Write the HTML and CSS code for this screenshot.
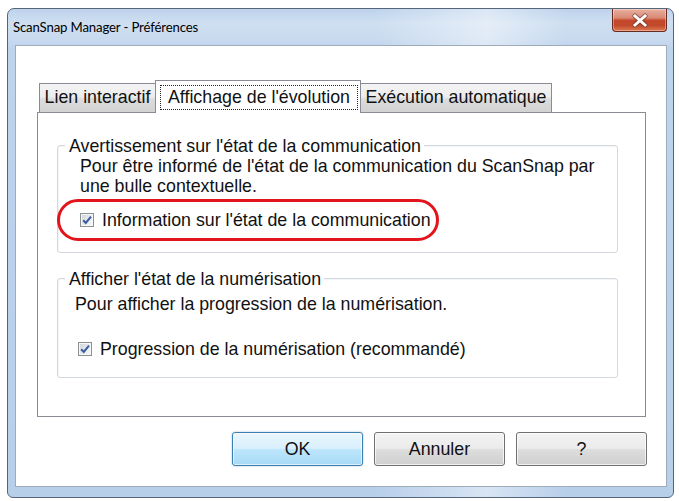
FILE: index.html
```html
<!DOCTYPE html>
<html lang="fr">
<head>
<meta charset="utf-8">
<title>ScanSnap Manager - Préférences</title>
<link rel="stylesheet" href="styles.css">
</head>
<body>
<div class="window">
  <div class="titlebar">
    <span class="title">ScanSnap Manager - Préférences</span>
    <div class="close">
      <svg width="20" height="15" viewBox="0 0 20 15">
        <path d="M5 3 L15 12 M15 3 L5 12" stroke="#5a2a22" stroke-width="5" stroke-linecap="round" fill="none" opacity="0.55"/>
        <path d="M5 3 L15 12 M15 3 L5 12" stroke="#ffffff" stroke-width="3" stroke-linecap="square" fill="none"/>
      </svg>
    </div>
  </div>
  <div class="client">
    <div class="tabs">
      <div class="tab tab-lien">Lien interactif</div>
      <div class="tab tab-active"><span class="focus">Affichage de l'évolution</span></div>
      <div class="tab tab-exec">Exécution automatique</div>
    </div>
    <div class="pane">
      <div class="group group-comm">
        <div class="legend">Avertissement sur l'état de la communication</div>
        <p class="desc desc-comm">Pour être informé de l'état de la communication du ScanSnap par<br>une bulle contextuelle.</p>
        <div class="check check-comm">
          <span class="box"><svg width="12" height="12" viewBox="0 0 12 12"><path d="M2.2 6.2 L4.8 9 L10 2.6" stroke="#3c5a9c" stroke-width="2" fill="none"/></svg></span>
          <span>Information sur l'état de la communication</span>
        </div>
        <div class="ring"></div>
      </div>
      <div class="group group-scan">
        <div class="legend">Afficher l'état de la numérisation</div>
        <p class="desc desc-scan">Pour afficher la progression de la numérisation.</p>
        <div class="check check-scan">
          <span class="box"><svg width="12" height="12" viewBox="0 0 12 12"><path d="M2.2 6.2 L4.8 9 L10 2.6" stroke="#3c5a9c" stroke-width="2" fill="none"/></svg></span>
          <span>Progression de la numérisation (recommandé)</span>
        </div>
      </div>
    </div>
    <div class="buttons">
      <div class="btn btn-default">OK</div>
      <div class="btn">Annuler</div>
      <div class="btn">?</div>
    </div>
  </div>
</div>
</body>
</html>
```
FILE: styles.css
```css
* { box-sizing: border-box; }
body {
  margin: 0;
  background: #ffffff;
  font-family: "Liberation Sans", Arial, sans-serif;
  color: #111;
}
.window {
  margin: 8px 0 0 7px;
  width: 667px;
  height: 490px;
  border: 1px solid #56657a;
  border-radius: 7px 7px 6px 6px;
  padding: 0 6px 10px 7px;
  display: flex;
  flex-direction: column;
  background:
    linear-gradient(to right, rgba(255,255,255,0) 0%, rgba(255,255,255,0) 55%, rgba(255,255,255,0.45) 72%, rgba(255,255,255,0) 84%, rgba(255,255,255,0) 100%),
    linear-gradient(#bdd3ec 0px, #cfdff1 14px, #c8daef 30px, #bed3ec 40px, #b8cfea 100%);
}
.titlebar {
  height: 36px;
  margin: 0 -6px 0 -7px;
  padding-left: 5px;
  display: flex;
  justify-content: space-between;
  align-items: flex-start;
}
.title {
  font-family: Lato, "Liberation Sans", sans-serif;
  font-size: 13.2px;
  letter-spacing: -0.15px;
  line-height: 17px;
  padding-top: 10px;
  color: #000;
}
.close {
  width: 55px;
  height: 23px;
  margin-right: 6px;
  border: 1px solid #6a2c20;
  border-top: none;
  border-radius: 0 0 4px 4px;
  background: linear-gradient(#e7b1a2 0%, #d98a74 40%, #c5472b 52%, #c04a2c 75%, #e07a52 100%);
  display: flex;
  align-items: center;
  justify-content: center;
  box-shadow: inset 0 0 0 1px rgba(255,255,255,0.35);
}
.close svg { display: block; }
.client {
  flex: 1;
  border: 1px solid #9eabb9;
  background: #ffffff;
  padding: 34px 20px 0 21px;
  display: flex;
  flex-direction: column;
  font-size: 17.8px;
  line-height: 20px;
}
.tabs {
  display: flex;
  align-items: flex-end;
  padding-left: 2px;
  height: 32px;
}
.tab {
  height: 29px;
  border: 1px solid #898c95;
  border-bottom: none;
  background: linear-gradient(#f4f4f4, #ececec 45%, #dcdcdc 55%, #d2d2d2);
  padding-top: 3px;
  text-align: center;
  white-space: nowrap;
}
.tab-lien { width: 117px; }
.tab-active {
  width: 206px;
  height: 33px;
  margin-left: -1px;
  margin-bottom: -1px;
  background: #ffffff;
  padding: 4px 2px 0 4px;
  position: relative;
  z-index: 1;
}
.tab-exec { width: 192px; margin-left: -1px; }
.focus {
  display: block;
  width: 198px;
  border: 1px dotted #222;
  padding: 1px 0 2px;
  line-height: 20px;
}
.pane {
  height: 305px;
  border: 1px solid #898c95;
  padding: 32px 27px 0 19px;
}
.group {
  position: relative;
  border: 1px solid #d3d9de;
  border-radius: 3px;
  box-shadow: 1px 1px 0 #f2f4f6 inset;
}
.group-comm { height: 108px; }
.group-scan { height: 100px; margin-top: 25px; }
.legend {
  display: table;
  margin: -10px 0 0 7px;
  padding: 0 3px 0 4px;
  background: #ffffff;
}
.desc { margin: 0; }
.desc-comm { margin-left: 22px; }
.desc-scan { margin: 5px 0 0 17px; }
.check {
  display: flex;
  align-items: center;
  gap: 8px;
  height: 20px;
}
.check-comm { margin: 14px 0 0 22px; }
.check-scan { margin: 25px 0 0 20px; }
.box {
  width: 14px;
  height: 14px;
  border: 1px solid #8e8f8f;
  background: linear-gradient(135deg, #cdd3da, #eef1f4 70%, #f8f9fa);
  box-shadow: inset 0 0 0 1px #f6f7f8;
  display: flex;
  align-items: center;
  justify-content: center;
}
.box svg { display: block; }
.ring {
  position: absolute;
  left: -1px;
  top: 53px;
  width: 382px;
  height: 42px;
  border: 3.5px solid #e2141c;
  border-radius: 21px;
}
.buttons {
  display: flex;
  justify-content: flex-end;
  gap: 11px;
  margin: 15px -1px 0 0;
}
.btn {
  width: 131px;
  height: 34px;
  border: 1px solid #707070;
  border-radius: 3px;
  background: linear-gradient(#f3f3f3, #ebebeb 48%, #dddddd 52%, #cfcfcf);
  box-shadow: inset 0 0 0 1px rgba(255,255,255,0.7);
  text-align: center;
  line-height: 32px;
  color: #111;
}
.btn-default {
  border-color: #3c7fb1;
  background: linear-gradient(#eaf6fd, #d9f0fc 48%, #bee6fd 52%, #a7d9f5);
  box-shadow: inset 0 0 0 1px rgba(255,255,255,0.6), 0 0 2px rgba(60,127,177,0.5);
}
```
